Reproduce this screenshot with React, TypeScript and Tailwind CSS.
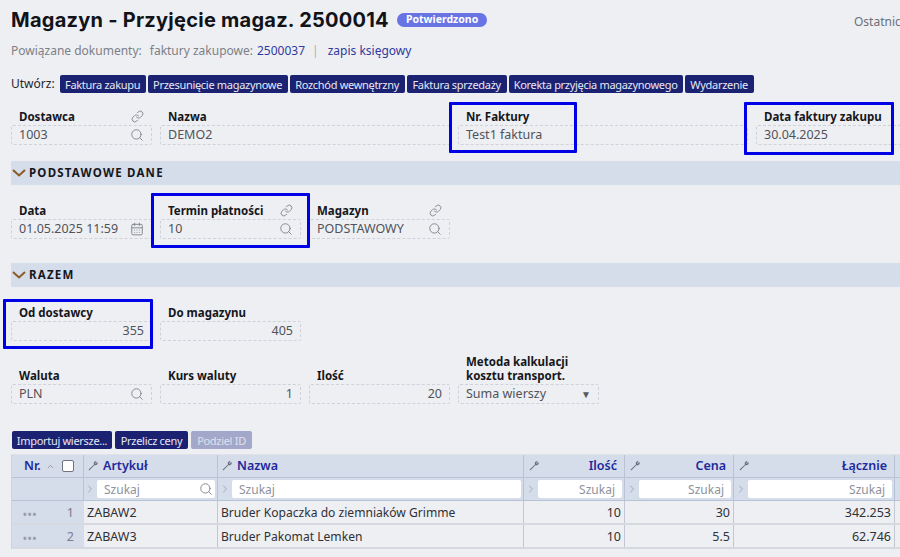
import React from "react";
import { Search, Link, CalendarDays, ChevronRight, ChevronUp } from "lucide-react";

const font = "font-['Noto_Sans','Open_Sans',sans-serif]";

function Wrench() {
  return (
    <svg width="10" height="10" viewBox="0 0 10 10" className="shrink-0 text-[#6b7080]" fill="currentColor">
      <path d="M9.4 0.9 7.7 2.5 7 2.9 7.3 2 8.7 0.5C7.4 0 6 0.6 5.8 1.9 5.7 2.5 5.9 3 6 3.4L0.6 8.6 1.2 9.4 6.4 4.2C7.6 4.7 9.5 4 9.7 2.3 9.7 1.7 9.6 1.3 9.4 0.9Z" />
    </svg>
  );
}

function Btn({ children, w, disabled }: { children: React.ReactNode; w: string; disabled?: boolean }) {
  return (
    <span className={`${w} h-[18px] flex items-center justify-center rounded-[2px] text-[11px] tracking-[-0.3px] leading-none whitespace-nowrap ${disabled ? "bg-[#a3a7c9] text-[#dfe1ee]" : "bg-[#1c2272] text-[#e6e8f5]"}`}>
      {children}
    </span>
  );
}

function Field({
  label, value, w, right, icon, link,
}: {
  label: React.ReactNode; value: string; w: string; right?: boolean; icon?: React.ReactNode; link?: boolean;
}) {
  return (
    <div className={`${w} shrink-0 flex flex-col`}>
      <div className="flex items-end justify-between pl-[8px] pr-[8px]">
        <span className="text-[11.5px] leading-[14px] font-bold text-[#15171c]">{label}</span>
        {link && <Link size={13} strokeWidth={1.6} className="text-[#7b7f88] mb-[1px]" />}
      </div>
      <div className={`mt-[1px] h-[20px] border border-dashed border-[#cfd2da] rounded-[2px] flex items-center px-[7px] text-[12.5px] text-[#50535a] ${right ? "justify-end" : "justify-between"}`}>
        <span className="whitespace-nowrap pt-[1px]">{value}</span>
        {icon}
      </div>
    </div>
  );
}

const search = <Search size={14} strokeWidth={1.6} className="text-[#80848d] shrink-0" />;

function Section({ title }: { title: string }) {
  return (
    <div className="h-[24px] bg-[#d5dcea] flex items-center pl-[1px]">
      <svg width="14" height="8" viewBox="0 0 14 8" className="shrink-0" fill="none" stroke="#8a5a24" strokeWidth="2">
        <polyline points="1,1 7,6.5 13,1" />
      </svg>
      <span className="ml-[3px] text-[11.5px] font-bold tracking-[1.2px] text-[#15171c]">{title}</span>
    </div>
  );
}

const cols = ["w-[72px]", "w-[134px]", "w-[306px]", "w-[101px]", "w-[109px]", "w-[161px]"];

function Head({ w, title, right }: { w: string; title: string; right?: boolean }) {
  return (
    <div className={`${w} shrink-0 h-full flex items-center pr-[7px] border-r border-[#b9c3d6] ${right ? "pl-[5px] justify-between" : "pl-[4px] gap-[5px]"}`}>
      <Wrench />
      <span className="text-[12.5px] font-semibold text-[#1d2a9c] pt-[1px]">{title}</span>
    </div>
  );
}

function Filter({ w, right, icon }: { w: string; right?: boolean; icon?: boolean }) {
  return (
    <div className={`${w} shrink-0 h-full flex items-center pr-[2px] border-r border-[#b9c3d6] gap-[1px] ${icon ? "pl-0" : "pl-[1px]"}`}>
      <ChevronRight size={12} className="text-[#a3a9b8] shrink-0" />
      <div className={`flex-1 h-[18px] bg-white rounded-[2px] flex items-center px-[7px] text-[12px] text-[#8f929c] ${right ? "justify-end" : "justify-between"}`}>
        <span className="pt-[2px]">Szukaj</span>
        {icon && <Search size={14} strokeWidth={1.6} className="text-[#80848d] -mr-[5px]" />}
      </div>
    </div>
  );
}

function Row({ n, a, b, q, c, t }: { n: number; a: string; b: string; q: string; c: string; t: string }) {
  const cell = "shrink-0 h-full flex items-center border-r border-[#c3c7d2] px-[3px] pt-[3px]";
  return (
    <div className="h-[24px] flex border-b-2 border-[#d6d9e0] text-[12.5px] text-[#2f3136]">
      <div className={`${cols[0]} shrink-0 h-full flex items-center justify-between pl-[11px] pr-[10px] pt-[3px] bg-[#d5dcea] text-[#7a7e8a]`}>
        <span className="text-[10px] leading-none tracking-[1px] font-bold text-[#9a9eab]">•••</span>
        <span>{n}</span>
      </div>
      <div className={`${cols[1]} ${cell}`}>{a}</div>
      <div className={`${cols[2]} ${cell} text-[12.1px]`}>{b}</div>
      <div className={`${cols[3]} ${cell} justify-end`}>{q}</div>
      <div className={`${cols[4]} ${cell} justify-end`}>{c}</div>
      <div className={`${cols[5]} ${cell} justify-end`}>{t}</div>
    </div>
  );
}

function Mark({ className }: { className: string }) {
  return <div className={`absolute border-[3px] border-[#0000e6] rounded-[1px] ${className}`} />;
}

export default function App() {
  return (
    <div className={`relative w-[900px] h-[557px] overflow-hidden bg-[#eeeff2] ${font}`}>
      <div className="pl-[11px]">
        <div className="h-[40px] flex items-center whitespace-nowrap relative">
          <h1 className="font-['Inter',sans-serif] text-[20px] font-bold tracking-[0.25px] text-[#111318] leading-none">Magazyn - Przyjęcie magaz. 2500014</h1>
          <span className="ml-[8px] h-[14px] px-[9px] rounded-full bg-[#6873e4] text-white text-[10.5px] font-bold flex items-center">Potwierdzono</span>
          <span className="absolute left-[843px] top-[13px] text-[12px] text-[#6d7077]">Ostatnic</span>
        </div>
        <div className="mt-[1px] h-[20px] flex items-center text-[12px] text-[#7c7f87] whitespace-nowrap">
          <span>Powiązane dokumenty:</span>
          <span className="ml-[8px]">faktury zakupowe:</span>
          <span className="ml-[4px] text-[#2f3aa0]">2500037</span>
          <span className="ml-[7px] text-[#a9b0bf]">|</span>
          <span className="ml-[9px] text-[#2f3aa0]">zapis księgowy</span>
        </div>
        <div className="mt-[14px] flex items-center gap-[2px] text-[12px] text-[#25272c]">
          <span className="mr-[3px]">Utwórz:</span>
          <Btn w="w-[86px]">Faktura zakupu</Btn>
          <Btn w="w-[140px]">Przesunięcie magazynowe</Btn>
          <Btn w="w-[115px]">Rozchód wewnętrzny</Btn>
          <Btn w="w-[100px]">Faktura sprzedaży</Btn>
          <Btn w="w-[174px]">Korekta przyjęcia magazynowego</Btn>
          <Btn w="w-[69px]">Wydarzenie</Btn>
        </div>
        <div className="mt-[17px] flex gap-[8px]">
          <Field w="w-[141px]" label="Dostawca" value="1003" icon={search} link />
          <Field w="w-[290px]" label="Nazwa" value="DEMO2" />
          <Field w="w-[290px]" label="Nr. Faktury" value="Test1 faktura" />
          <Field w="w-[290px]" label="Data faktury zakupu" value="30.04.2025" />
        </div>
        <div className="mt-[16px]"><Section title="PODSTAWOWE DANE" /></div>
        <div className="mt-[19px] flex gap-[8px]">
          <Field w="w-[141px]" label="Data" value="01.05.2025 11:59" icon={<CalendarDays size={14} strokeWidth={1.6} className="text-[#80848d] shrink-0" />} />
          <Field w="w-[141px]" label="Termin płatności" value="10" icon={search} link />
          <Field w="w-[141px]" label="Magazyn" value="PODSTAWOWY" icon={search} link />
        </div>
        <div className="mt-[24px]"><Section title="RAZEM" /></div>
        <div className="mt-[19px] flex gap-[8px]">
          <Field w="w-[141px]" label="Od dostawcy" value="355" right />
          <Field w="w-[141px]" label="Do magazynu" value="405" right />
        </div>
        <div className="mt-[14px] flex gap-[8px] items-end">
          <Field w="w-[141px]" label="Waluta" value="PLN" icon={search} />
          <Field w="w-[141px]" label="Kurs waluty" value="1" right />
          <Field w="w-[141px]" label="Ilość" value="20" right />
          <Field
            w="w-[141px]"
            label={<>Metoda kalkulacji<br />kosztu transport.</>}
            value="Suma wierszy"
            icon={<span className="text-[10px] text-[#55585f]">▼</span>}
          />
        </div>
        <div className="mt-[27px] flex gap-[3px] pl-[1px]">
          <Btn w="w-[100px]">Importuj wiersze...</Btn>
          <Btn w="w-[73px]">Przelicz ceny</Btn>
          <Btn w="w-[61px]" disabled>Podziel ID</Btn>
        </div>
        <div className="mt-[5px] w-[904px] border-t border-[#dfe2e8] border-l border-l-[#cdd3e0]">
          <div className="h-[23px] flex bg-[#d5dcea] border-b border-[#b9c3d6]">
            <div className={`${cols[0]} shrink-0 h-full flex items-center pl-[12px] border-r border-[#b9c3d6]`}>
              <span className="text-[12.5px] font-semibold text-[#1d2a9c] pt-[1px]">Nr.</span>
              <ChevronUp size={9} className="ml-[5px] text-[#7f8592]" />
              <span className="ml-[7px] w-[12px] h-[12px] bg-white border border-[#6f7480] rounded-[2px]" />
            </div>
            <Head w={cols[1]} title="Artykuł" />
            <Head w={cols[2]} title="Nazwa" />
            <Head w={cols[3]} title="Ilość" right />
            <Head w={cols[4]} title="Cena" right />
            <Head w={cols[5]} title="Łącznie" right />
          </div>
          <div className="h-[23px] flex bg-[#d5dcea] border-b border-[#b9c3d6]">
            <div className={`${cols[0]} shrink-0 h-full border-r border-[#b9c3d6]`} />
            <Filter w={cols[1]} icon />
            <Filter w={cols[2]} />
            <Filter w={cols[3]} right />
            <Filter w={cols[4]} right />
            <Filter w={cols[5]} right />
          </div>
          <Row n={1} a="ZABAW2" b="Bruder Kopaczka do ziemniaków Grimme" q="10" c="30" t="342.253" />
          <Row n={2} a="ZABAW3" b="Bruder Pakomat Lemken" q="10" c="5.5" t="62.746" />
        </div>
      </div>
      <Mark className="left-[449px] top-[102px] w-[128px] h-[51px]" />
      <Mark className="left-[744px] top-[102px] w-[150px] h-[53px]" />
      <Mark className="left-[151px] top-[193px] w-[159px] h-[55px]" />
      <Mark className="left-[3px] top-[299px] w-[150px] h-[50px]" />
    </div>
  );
}
